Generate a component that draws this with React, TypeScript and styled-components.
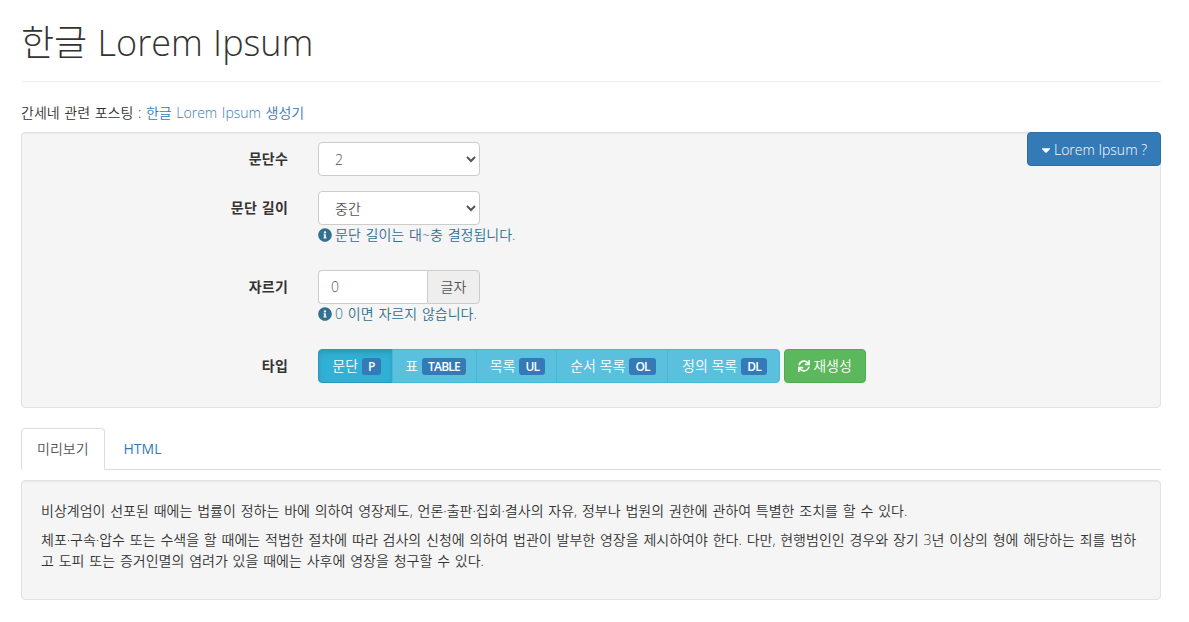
import { useState } from 'react';
import styled, { createGlobalStyle } from 'styled-components';
import { FaCaretDown, FaInfoCircle, FaSync } from 'react-icons/fa';

const GlobalStyle = createGlobalStyle`
  * {
    box-sizing: border-box;
  }
  body {
    margin: 0;
    background: #fff;
    color: #333;
    font-family: "Open Sans", "Noto Sans CJK KR", sans-serif;
    font-size: 14px;
    line-height: 20px;
    font-weight: 350;
    word-spacing: 1px;
  }
`;

const Page = styled.div`
  padding: 0 28px 22px 21px;
`;

const Header = styled.header`
  height: 82px;
  padding-top: 21px;
  border-bottom: 1px solid #eee;
`;

const Title = styled.h1`
  margin: 0;
  font-size: 36px;
  line-height: 44px;
  font-weight: 300;
`;

const Intro = styled.p`
  margin: 21px 0 9px;
  font-size: 14px;
`;

const Link = styled.a`
  color: #337ab7;
  text-decoration: none;
`;

const Well = styled.div`
  position: relative;
  background: #f5f5f5;
  border: 1px solid #e3e3e3;
  border-radius: 4px;
  box-shadow: inset 0 1px 1px rgba(0, 0, 0, 0.05);
`;

const FormWell = styled(Well)`
  padding: 9px 0 9px;
`;

const HelpButton = styled.button`
  position: absolute;
  top: -1px;
  right: -1px;
  width: 134px;
  height: 34px;
  display: flex;
  align-items: center;
  justify-content: center;
  gap: 1px;
  padding: 1px 2px 0 0;
  background: #337ab7;
  border: 1px solid #2e6da4;
  border-radius: 4px;
  color: #fff;
  font: inherit;
  font-weight: 300;
`;

const Row = styled.div`
  display: grid;
  grid-template-columns: 266px 1fr;
  column-gap: 30px;
  margin-bottom: ${p => p.$gap}px;
`;

const Label = styled.label`
  padding-top: 7px;
  text-align: right;
  font-weight: 700;
  letter-spacing: 0.2px;
`;

const Select = styled.select`
  display: block;
  width: 162px;
  height: 34px;
  padding: 6px 12px;
  background: #fff;
  border: 1px solid #ccc;
  border-radius: 4px;
  color: #555;
  font: inherit;
`;

const InputGroup = styled.div`
  display: flex;
  width: 162px;
  height: 34px;
`;

const Input = styled.input`
  width: 109px;
  padding: 6px 12px;
  background: #fff;
  border: 1px solid #ccc;
  border-right: 0;
  border-radius: 4px 0 0 4px;
  color: #555;
  font: inherit;
`;

const Addon = styled.span`
  flex: 1;
  display: flex;
  align-items: center;
  justify-content: center;
  background: #eee;
  border: 1px solid #ccc;
  border-radius: 0 4px 4px 0;
  color: #555;
`;

const Help = styled.div`
  display: flex;
  align-items: center;
  gap: 3px;
  height: 20px;
  color: #31708f;
  word-spacing: 1.2px;

  svg {
    width: 14px;
    height: 14px;
  }
`;

const TypeRow = styled.div`
  display: flex;
  gap: 4px;
`;

const TypeGroup = styled.div`
  display: flex;
  height: 34px;
`;

const TypeButton = styled.button`
  width: ${p => p.$width}px;
  display: flex;
  align-items: center;
  justify-content: center;
  gap: 4px;
  padding: 0 0 0 2px;
  margin-left: -1px;
  background: ${p => (p.$active ? '#31b0d5' : '#5bc0de')};
  border: 1px solid ${p => (p.$active ? '#269abc' : '#46b8da')};
  box-shadow: ${p => (p.$active ? 'inset 0 3px 5px rgba(0, 0, 0, 0.125)' : 'none')};
  color: #fff;
  font: inherit;

  &:first-child {
    margin-left: 0;
    border-radius: 4px 0 0 4px;
  }
  &:last-child {
    border-radius: 0 4px 4px 0;
  }
`;

const Badge = styled.span`
  padding: 1px 6px;
  background: #337ab7;
  border-radius: 3px;
  color: #fff;
  font-size: 12px;
  line-height: 15px;
  font-weight: 600;
  letter-spacing: -0.8px;
`;

const RegenButton = styled.button`
  width: 82px;
  display: flex;
  align-items: center;
  justify-content: center;
  gap: 3px;
  padding: 0;
  background: #5cb85c;
  border: 1px solid #4cae4c;
  border-radius: 4px;
  color: #fff;
  font: inherit;

  svg {
    width: 12px;
    height: 12px;
  }
`;

const Tabs = styled.div`
  display: flex;
  gap: 3px;
  margin-top: 20px;
  border-bottom: 1px solid #ddd;
`;

const Tab = styled.a`
  height: 42px;
  margin-bottom: -1px;
  padding: 10px 15px;
  background: ${p => (p.$active ? '#fff' : 'transparent')};
  border: 1px solid ${p => (p.$active ? '#ddd' : 'transparent')};
  border-bottom-color: ${p => (p.$active ? '#fff' : 'transparent')};
  border-radius: 4px 4px 0 0;
  color: ${p => (p.$active ? '#555' : '#337ab7')};
  font-weight: ${p => (p.$active ? 350 : 400)};
`;

const Preview = styled(Well)`
  height: 120px;
  margin-top: 10px;
  padding: 19px;

  p {
    margin: 0 0 8px;
    font-size: 14px;
    line-height: 21px;
    word-spacing: 1.2px;
    word-break: break-all;
  }
`;

const types = [
  { label: '문단', badge: 'P', width: 75 },
  { label: '표', badge: 'TABLE', width: 85 },
  { label: '목록', badge: 'UL', width: 81 },
  { label: '순서 목록', badge: 'OL', width: 112 },
  { label: '정의 목록', badge: 'DL', width: 113 },
];

export default function App() {
  const [active, setActive] = useState('P');
  return (
    <Page>
      <GlobalStyle />
      <Header>
        <Title>한글 Lorem Ipsum</Title>
      </Header>
      <Intro>
        간세네 관련 포스팅 : <Link href="#">한글 Lorem Ipsum 생성기</Link>
      </Intro>
      <FormWell>
        <HelpButton>
          <FaCaretDown size={14} /> Lorem Ipsum ?
        </HelpButton>
        <Row $gap={15}>
          <Label>문단수</Label>
          <Select defaultValue="2">
            <option>1</option>
            <option>2</option>
            <option>3</option>
          </Select>
        </Row>
        <Row $gap={25}>
          <Label>문단 길이</Label>
          <div>
            <Select defaultValue="중간">
              <option>짧음</option>
              <option>중간</option>
              <option>길게</option>
            </Select>
            <Help>
              <FaInfoCircle /> 문단 길이는 대~충 결정됩니다.
            </Help>
          </div>
        </Row>
        <Row $gap={25}>
          <Label>자르기</Label>
          <div>
            <InputGroup>
              <Input defaultValue="0" />
              <Addon>글자</Addon>
            </InputGroup>
            <Help>
              <FaInfoCircle /> 0 이면 자르지 않습니다.
            </Help>
          </div>
        </Row>
        <Row $gap={15}>
          <Label>타입</Label>
          <TypeRow>
            <TypeGroup>
              {types.map(t => (
                <TypeButton key={t.badge} $width={t.width} $active={active === t.badge} onClick={() => setActive(t.badge)}>
                  {t.label} <Badge>{t.badge}</Badge>
                </TypeButton>
              ))}
            </TypeGroup>
            <RegenButton>
              <FaSync /> 재생성
            </RegenButton>
          </TypeRow>
        </Row>
      </FormWell>
      <Tabs>
        <Tab $active>미리보기</Tab>
        <Tab>HTML</Tab>
      </Tabs>
      <Preview>
        <p>비상계엄이 선포된 때에는 법률이 정하는 바에 의하여 영장제도, 언론·출판·집회·결사의 자유, 정부나 법원의 권한에 관하여 특별한 조치를 할 수 있다.</p>
        <p>체포·구속·압수 또는 수색을 할 때에는 적법한 절차에 따라 검사의 신청에 의하여 법관이 발부한 영장을 제시하여야 한다. 다만, 현행범인인 경우와 장기 3년 이상의 형에 해당하는 죄를 범하고 도피 또는 증거인멸의 염려가 있을 때에는 사후에 영장을 청구할 수 있다.</p>
      </Preview>
    </Page>
  );
}
